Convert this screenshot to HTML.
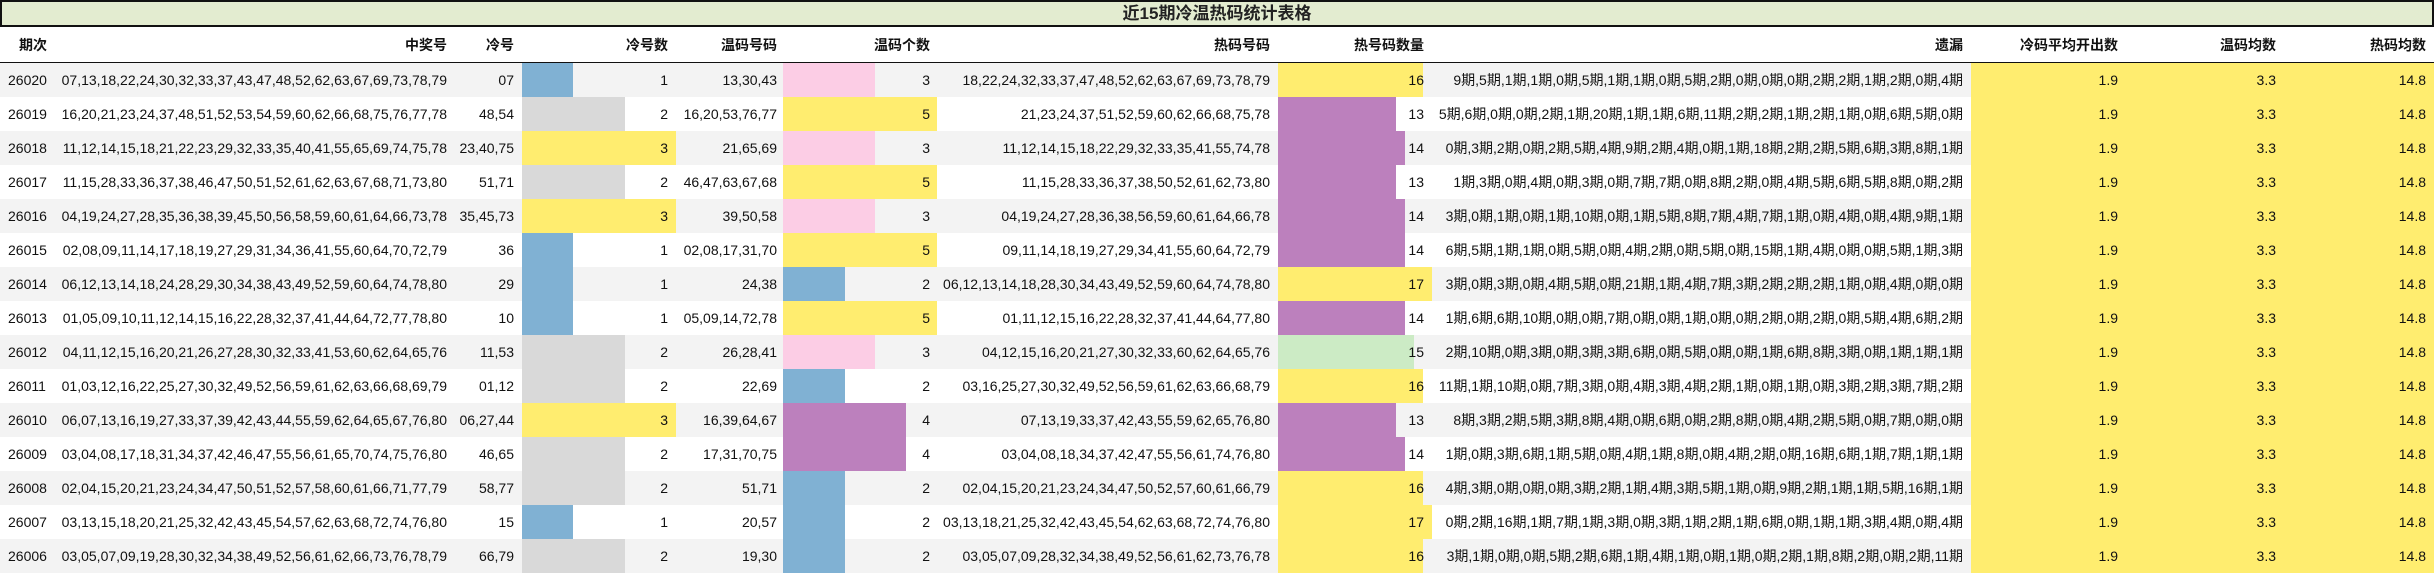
<!DOCTYPE html>
<html><head><meta charset="utf-8">
<style>
*{margin:0;padding:0;box-sizing:border-box}
body{width:2434px;height:575px;background:#fff;position:relative;overflow:hidden;font-family:"Liberation Sans","Noto Sans CJK SC",sans-serif;font-size:14px;color:#111}
.t{position:absolute;left:0;top:0;width:2434px;height:27px;background:#e3ecd0;border:2px solid #111;text-align:center;line-height:23px;font-size:17px;font-weight:bold;color:#222}
.h{position:absolute;left:0;top:27px;width:2434px;height:37px;border-bottom:2px solid #111;font-weight:bold;line-height:36px}
.h span,.r span{position:absolute;top:0;text-align:right;white-space:nowrap}
.r{position:absolute;left:0;width:2434px;height:34px;line-height:34px}
.g{background:#f3f3f3}
.r i{position:absolute;top:0;height:34px;display:block}
.y{left:1971px;width:463px;background:#ffed6f}
.B{background:#80b1d3}.G{background:#d9d9d9}.Y{background:#ffed6f}.P{background:#fccde5}.U{background:#bc80bd}.N{background:#ccebc5}
.c0{left:8px;text-align:left!important}
.c1{left:0;width:447px}
.c2{left:455px;width:59px}
.c3{left:522px;width:146px}
.c4{left:680px;width:97px}
.c5{left:783px;width:147px}
.c6{left:940px;width:330px}
.c7{left:1277px;width:147px}
.c8{left:1430px;width:533px}
.c9{left:1975px;width:143px}
.c10{left:2130px;width:146px}
.c11{left:2290px;width:136px}
</style></head><body>
<div class="t">近15期冷温热码统计表格</div>
<div class="h"><span class="c0" style="left:19px">期次</span><span class="c1">中奖号</span><span class="c2">冷号</span><span class="c3">冷号数</span><span class="c4">温码号码</span><span class="c5">温码个数</span><span class="c6">热码号码</span><span class="c7">热号码数量</span><span class="c8">遗漏</span><span class="c9">冷码平均开出数</span><span class="c10">温码均数</span><span class="c11">热码均数</span></div>

<div class="r g" style="top:63px"><i class="B" style="left:522px;width:51px"></i><i class="P" style="left:783px;width:92px"></i><i class="Y" style="left:1278px;width:145px"></i><i class="y"></i><span class="c0">26020</span><span class="c1">07,13,18,22,24,30,32,33,37,43,47,48,52,62,63,67,69,73,78,79</span><span class="c2">07</span><span class="c3">1</span><span class="c4">13,30,43</span><span class="c5">3</span><span class="c6">18,22,24,32,33,37,47,48,52,62,63,67,69,73,78,79</span><span class="c7">16</span><span class="c8">9期,5期,1期,1期,0期,5期,1期,1期,0期,5期,2期,0期,0期,0期,2期,2期,1期,2期,0期,4期</span><span class="c9">1.9</span><span class="c10">3.3</span><span class="c11">14.8</span></div>

<div class="r" style="top:97px"><i class="G" style="left:522px;width:103px"></i><i class="Y" style="left:783px;width:154px"></i><i class="U" style="left:1278px;width:118px"></i><i class="y"></i><span class="c0">26019</span><span class="c1">16,20,21,23,24,37,48,51,52,53,54,59,60,62,66,68,75,76,77,78</span><span class="c2">48,54</span><span class="c3">2</span><span class="c4">16,20,53,76,77</span><span class="c5">5</span><span class="c6">21,23,24,37,51,52,59,60,62,66,68,75,78</span><span class="c7">13</span><span class="c8">5期,6期,0期,0期,2期,1期,20期,1期,1期,6期,11期,2期,2期,1期,2期,1期,0期,6期,5期,0期</span><span class="c9">1.9</span><span class="c10">3.3</span><span class="c11">14.8</span></div>

<div class="r g" style="top:131px"><i class="Y" style="left:522px;width:154px"></i><i class="P" style="left:783px;width:92px"></i><i class="U" style="left:1278px;width:127px"></i><i class="y"></i><span class="c0">26018</span><span class="c1">11,12,14,15,18,21,22,23,29,32,33,35,40,41,55,65,69,74,75,78</span><span class="c2">23,40,75</span><span class="c3">3</span><span class="c4">21,65,69</span><span class="c5">3</span><span class="c6">11,12,14,15,18,22,29,32,33,35,41,55,74,78</span><span class="c7">14</span><span class="c8">0期,3期,2期,0期,2期,5期,4期,9期,2期,4期,0期,1期,18期,2期,2期,5期,6期,3期,8期,1期</span><span class="c9">1.9</span><span class="c10">3.3</span><span class="c11">14.8</span></div>

<div class="r" style="top:165px"><i class="G" style="left:522px;width:103px"></i><i class="Y" style="left:783px;width:154px"></i><i class="U" style="left:1278px;width:118px"></i><i class="y"></i><span class="c0">26017</span><span class="c1">11,15,28,33,36,37,38,46,47,50,51,52,61,62,63,67,68,71,73,80</span><span class="c2">51,71</span><span class="c3">2</span><span class="c4">46,47,63,67,68</span><span class="c5">5</span><span class="c6">11,15,28,33,36,37,38,50,52,61,62,73,80</span><span class="c7">13</span><span class="c8">1期,3期,0期,4期,0期,3期,0期,7期,7期,0期,8期,2期,0期,4期,5期,6期,5期,8期,0期,2期</span><span class="c9">1.9</span><span class="c10">3.3</span><span class="c11">14.8</span></div>

<div class="r g" style="top:199px"><i class="Y" style="left:522px;width:154px"></i><i class="P" style="left:783px;width:92px"></i><i class="U" style="left:1278px;width:127px"></i><i class="y"></i><span class="c0">26016</span><span class="c1">04,19,24,27,28,35,36,38,39,45,50,56,58,59,60,61,64,66,73,78</span><span class="c2">35,45,73</span><span class="c3">3</span><span class="c4">39,50,58</span><span class="c5">3</span><span class="c6">04,19,24,27,28,36,38,56,59,60,61,64,66,78</span><span class="c7">14</span><span class="c8">3期,0期,1期,0期,1期,10期,0期,1期,5期,8期,7期,4期,7期,1期,0期,4期,0期,4期,9期,1期</span><span class="c9">1.9</span><span class="c10">3.3</span><span class="c11">14.8</span></div>

<div class="r" style="top:233px"><i class="B" style="left:522px;width:51px"></i><i class="Y" style="left:783px;width:154px"></i><i class="U" style="left:1278px;width:127px"></i><i class="y"></i><span class="c0">26015</span><span class="c1">02,08,09,11,14,17,18,19,27,29,31,34,36,41,55,60,64,70,72,79</span><span class="c2">36</span><span class="c3">1</span><span class="c4">02,08,17,31,70</span><span class="c5">5</span><span class="c6">09,11,14,18,19,27,29,34,41,55,60,64,72,79</span><span class="c7">14</span><span class="c8">6期,5期,1期,1期,0期,5期,0期,4期,2期,0期,5期,0期,15期,1期,4期,0期,0期,5期,1期,3期</span><span class="c9">1.9</span><span class="c10">3.3</span><span class="c11">14.8</span></div>

<div class="r g" style="top:267px"><i class="B" style="left:522px;width:51px"></i><i class="B" style="left:783px;width:62px"></i><i class="Y" style="left:1278px;width:154px"></i><i class="y"></i><span class="c0">26014</span><span class="c1">06,12,13,14,18,24,28,29,30,34,38,43,49,52,59,60,64,74,78,80</span><span class="c2">29</span><span class="c3">1</span><span class="c4">24,38</span><span class="c5">2</span><span class="c6">06,12,13,14,18,28,30,34,43,49,52,59,60,64,74,78,80</span><span class="c7">17</span><span class="c8">3期,0期,3期,0期,4期,5期,0期,21期,1期,4期,7期,3期,2期,2期,2期,1期,0期,4期,0期,0期</span><span class="c9">1.9</span><span class="c10">3.3</span><span class="c11">14.8</span></div>

<div class="r" style="top:301px"><i class="B" style="left:522px;width:51px"></i><i class="Y" style="left:783px;width:154px"></i><i class="U" style="left:1278px;width:127px"></i><i class="y"></i><span class="c0">26013</span><span class="c1">01,05,09,10,11,12,14,15,16,22,28,32,37,41,44,64,72,77,78,80</span><span class="c2">10</span><span class="c3">1</span><span class="c4">05,09,14,72,78</span><span class="c5">5</span><span class="c6">01,11,12,15,16,22,28,32,37,41,44,64,77,80</span><span class="c7">14</span><span class="c8">1期,6期,6期,10期,0期,0期,7期,0期,0期,1期,0期,0期,2期,0期,2期,0期,5期,4期,6期,2期</span><span class="c9">1.9</span><span class="c10">3.3</span><span class="c11">14.8</span></div>

<div class="r g" style="top:335px"><i class="G" style="left:522px;width:103px"></i><i class="P" style="left:783px;width:92px"></i><i class="N" style="left:1278px;width:136px"></i><i class="y"></i><span class="c0">26012</span><span class="c1">04,11,12,15,16,20,21,26,27,28,30,32,33,41,53,60,62,64,65,76</span><span class="c2">11,53</span><span class="c3">2</span><span class="c4">26,28,41</span><span class="c5">3</span><span class="c6">04,12,15,16,20,21,27,30,32,33,60,62,64,65,76</span><span class="c7">15</span><span class="c8">2期,10期,0期,3期,0期,3期,3期,6期,0期,5期,0期,0期,1期,6期,8期,3期,0期,1期,1期,1期</span><span class="c9">1.9</span><span class="c10">3.3</span><span class="c11">14.8</span></div>

<div class="r" style="top:369px"><i class="G" style="left:522px;width:103px"></i><i class="B" style="left:783px;width:62px"></i><i class="Y" style="left:1278px;width:145px"></i><i class="y"></i><span class="c0">26011</span><span class="c1">01,03,12,16,22,25,27,30,32,49,52,56,59,61,62,63,66,68,69,79</span><span class="c2">01,12</span><span class="c3">2</span><span class="c4">22,69</span><span class="c5">2</span><span class="c6">03,16,25,27,30,32,49,52,56,59,61,62,63,66,68,79</span><span class="c7">16</span><span class="c8">11期,1期,10期,0期,7期,3期,0期,4期,3期,4期,2期,1期,0期,1期,0期,3期,2期,3期,7期,2期</span><span class="c9">1.9</span><span class="c10">3.3</span><span class="c11">14.8</span></div>

<div class="r g" style="top:403px"><i class="Y" style="left:522px;width:154px"></i><i class="U" style="left:783px;width:123px"></i><i class="U" style="left:1278px;width:118px"></i><i class="y"></i><span class="c0">26010</span><span class="c1">06,07,13,16,19,27,33,37,39,42,43,44,55,59,62,64,65,67,76,80</span><span class="c2">06,27,44</span><span class="c3">3</span><span class="c4">16,39,64,67</span><span class="c5">4</span><span class="c6">07,13,19,33,37,42,43,55,59,62,65,76,80</span><span class="c7">13</span><span class="c8">8期,3期,2期,5期,3期,8期,4期,0期,6期,0期,2期,8期,0期,4期,2期,5期,0期,7期,0期,0期</span><span class="c9">1.9</span><span class="c10">3.3</span><span class="c11">14.8</span></div>

<div class="r" style="top:437px"><i class="G" style="left:522px;width:103px"></i><i class="U" style="left:783px;width:123px"></i><i class="U" style="left:1278px;width:127px"></i><i class="y"></i><span class="c0">26009</span><span class="c1">03,04,08,17,18,31,34,37,42,46,47,55,56,61,65,70,74,75,76,80</span><span class="c2">46,65</span><span class="c3">2</span><span class="c4">17,31,70,75</span><span class="c5">4</span><span class="c6">03,04,08,18,34,37,42,47,55,56,61,74,76,80</span><span class="c7">14</span><span class="c8">1期,0期,3期,6期,1期,5期,0期,4期,1期,8期,0期,4期,2期,0期,16期,6期,1期,7期,1期,1期</span><span class="c9">1.9</span><span class="c10">3.3</span><span class="c11">14.8</span></div>

<div class="r g" style="top:471px"><i class="G" style="left:522px;width:103px"></i><i class="B" style="left:783px;width:62px"></i><i class="Y" style="left:1278px;width:145px"></i><i class="y"></i><span class="c0">26008</span><span class="c1">02,04,15,20,21,23,24,34,47,50,51,52,57,58,60,61,66,71,77,79</span><span class="c2">58,77</span><span class="c3">2</span><span class="c4">51,71</span><span class="c5">2</span><span class="c6">02,04,15,20,21,23,24,34,47,50,52,57,60,61,66,79</span><span class="c7">16</span><span class="c8">4期,3期,0期,0期,0期,3期,2期,1期,4期,3期,5期,1期,0期,9期,2期,1期,1期,5期,16期,1期</span><span class="c9">1.9</span><span class="c10">3.3</span><span class="c11">14.8</span></div>

<div class="r" style="top:505px"><i class="B" style="left:522px;width:51px"></i><i class="B" style="left:783px;width:62px"></i><i class="Y" style="left:1278px;width:154px"></i><i class="y"></i><span class="c0">26007</span><span class="c1">03,13,15,18,20,21,25,32,42,43,45,54,57,62,63,68,72,74,76,80</span><span class="c2">15</span><span class="c3">1</span><span class="c4">20,57</span><span class="c5">2</span><span class="c6">03,13,18,21,25,32,42,43,45,54,62,63,68,72,74,76,80</span><span class="c7">17</span><span class="c8">0期,2期,16期,1期,7期,1期,3期,0期,3期,1期,2期,1期,6期,0期,1期,1期,3期,4期,0期,4期</span><span class="c9">1.9</span><span class="c10">3.3</span><span class="c11">14.8</span></div>

<div class="r g" style="top:539px"><i class="G" style="left:522px;width:103px"></i><i class="B" style="left:783px;width:62px"></i><i class="Y" style="left:1278px;width:145px"></i><i class="y"></i><span class="c0">26006</span><span class="c1">03,05,07,09,19,28,30,32,34,38,49,52,56,61,62,66,73,76,78,79</span><span class="c2">66,79</span><span class="c3">2</span><span class="c4">19,30</span><span class="c5">2</span><span class="c6">03,05,07,09,28,32,34,38,49,52,56,61,62,73,76,78</span><span class="c7">16</span><span class="c8">3期,1期,0期,0期,5期,2期,6期,1期,4期,1期,0期,1期,0期,2期,1期,8期,2期,0期,2期,11期</span><span class="c9">1.9</span><span class="c10">3.3</span><span class="c11">14.8</span></div>
</body></html>
